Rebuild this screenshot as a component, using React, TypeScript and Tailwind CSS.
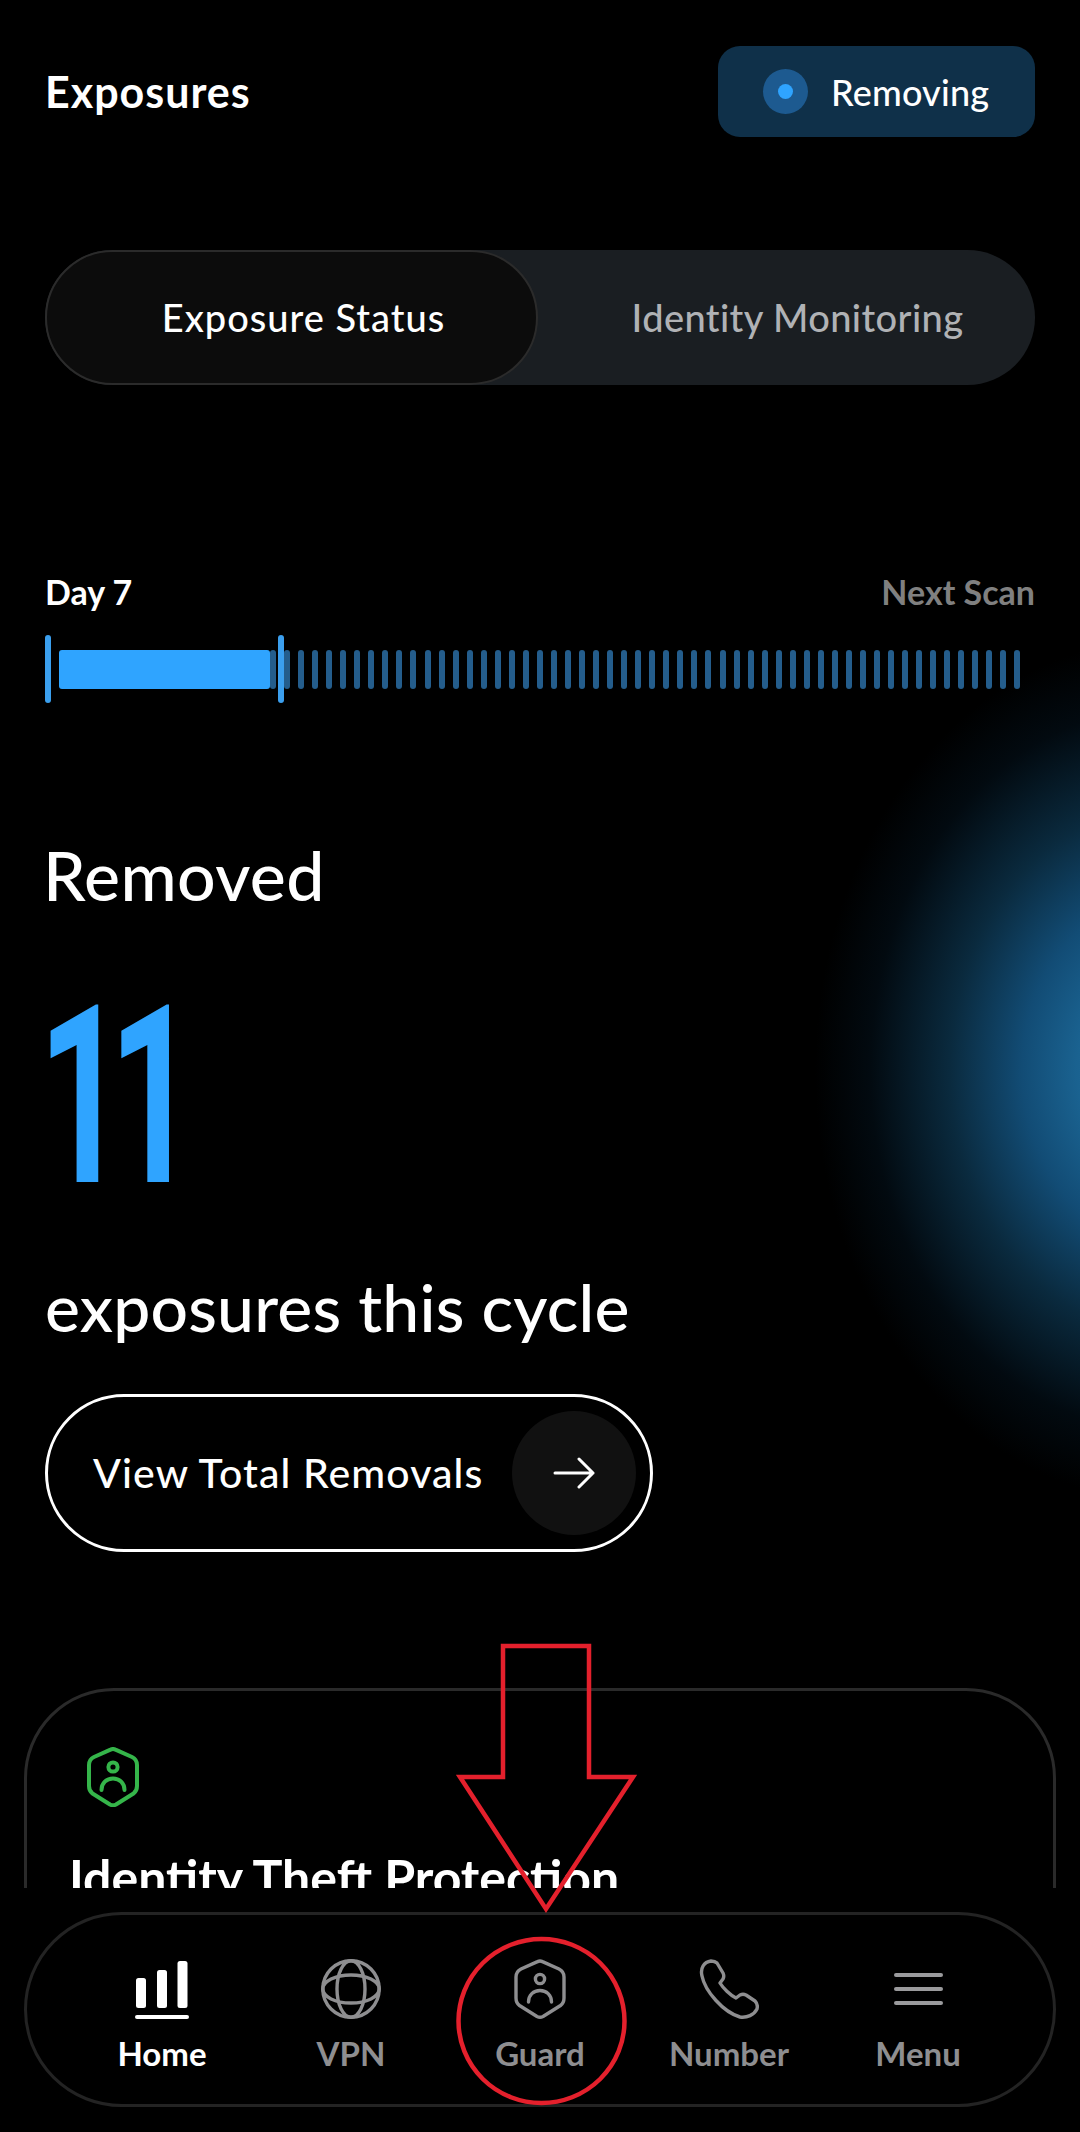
import React from "react";

const font = { fontFamily: '"Lato", "Noto Sans", sans-serif' };

function ShieldIcon({ className, strokeWidth = 3.4 }: { className: string; strokeWidth?: number }) {
  return (
    <svg viewBox="0 0 52 60" width="52" height="60" fill="none" stroke="currentColor" strokeWidth={strokeWidth} strokeLinecap="round" strokeLinejoin="round" className={className}>
      <path d="M23.5 2.6 Q26 1.4 28.5 2.6 L45 10 Q50 12.5 50 18 V39 Q50 44 46.5 46.5 L29 57.5 Q26 59 23 57.5 L5.5 46.5 Q2 44 2 39 V18 Q2 12.5 7 10 Z" />
      <circle cx="26" cy="20" r="4.6" />
      <path d="M14.5 43 C14.5 36 19.5 31.5 26 31.5 C32.5 31.5 37.5 36 37.5 43" />
    </svg>
  );
}

function NavItem({ label, active, children }: { label: string; active?: boolean; children: React.ReactNode }) {
  return (
    <div className={`flex w-[189px] flex-col items-center ${active ? "text-white" : "text-[#8e8e90]"}`}>
      <div className="flex h-[60px] items-center justify-center">{children}</div>
      <div className="mt-[12px] text-[33px] leading-[44px] font-bold">{label}</div>
    </div>
  );
}

export default function App() {
  const ticks = Array.from({ length: 54 });
  return (
    <div className="relative h-[2132px] w-[1080px] overflow-hidden bg-black text-white" style={font}>
      <div className="pointer-events-none absolute inset-0 bg-[radial-gradient(ellipse_345px_430px_at_1160px_1070px,#217099_0%,#1a6290_24%,#124c75_40%,#0a2a3e_61%,#020a10_84%,#000000_100%)]" />

      <div className="relative flex h-[1888px] flex-col overflow-hidden">
        <div className="shrink-0 px-[45px]">
          <div className="flex items-center justify-between pt-[46px]">
            <div className="text-[43px] leading-[52px] font-bold tracking-[1px]">Exposures</div>
            <div className="flex h-[91px] w-[317px] items-center rounded-[22px] bg-[#0f3049] pl-[45px]">
              <div className="flex h-[45px] w-[45px] items-center justify-center rounded-full bg-[#1d5a90]">
                <div className="h-[15px] w-[15px] rounded-full bg-[#2fa4ff]" />
              </div>
              <div className="ml-[23px] text-[36px] leading-[44px] font-medium tracking-[0.2px]">Removing</div>
            </div>
          </div>

          <div className="mt-[113px] flex h-[135px] w-[990px] items-center rounded-full bg-[#1a1e22]">
            <div className="flex h-[135px] w-[493px] items-center justify-center rounded-full border-2 border-[#2b2b2b] bg-[#0c0c0c] pl-[24px] text-[38px] font-medium tracking-[1px]">
              Exposure Status
            </div>
            <div className="flex-1 pl-[22px] text-center text-[38px] font-medium tracking-[0.4px] text-[#b0b2b5]">Identity Monitoring</div>
          </div>

          <div className="mt-[184px] flex items-center justify-between text-[34px] leading-[46px] font-bold">
            <span>Day 7</span>
            <span className="text-[#808080]">Next Scan</span>
          </div>

          <div className="relative mt-[20px] flex h-[68px] items-center">
            <div className="h-[68px] w-[6px] rounded-full bg-[#3b9fee]" />
            <div className="ml-[8px] h-[39px] w-[211px] rounded-[3px] bg-[#2fa4ff]" />
            <div className="flex flex-1 justify-between pr-[14px]">
              {ticks.map((_, i) => (
                <div key={i} className="h-[39px] w-[6px] rounded-full bg-[#245d8c]" />
              ))}
            </div>
            <div className="absolute top-0 left-[233px] h-[68px] w-[6px] rounded-full bg-[#3b9fee]" />
          </div>

          <div className="mt-[132px] -ml-[2px] text-[68px] leading-[80px] font-medium tracking-[0.4px]">Removed</div>
          <div
            className="mt-[48px] -ml-[7px] h-[270px] origin-left scale-x-[0.62] text-[248px] leading-[270px] font-bold tracking-[-28px] whitespace-nowrap text-[#2fa4ff]"
            style={{ fontFamily: '"Roboto", sans-serif' }}
          >
            11
          </div>
          <div className="mt-[32px] text-[66px] leading-[84px] font-medium tracking-[0.2px]">exposures this cycle</div>

          <div className="mt-[45px] flex h-[158px] w-[608px] items-center justify-between rounded-full border-[3px] border-white pr-[14px] pl-[45px]">
            <span className="text-[41px] font-medium tracking-[1.1px]">View Total Removals</span>
            <div className="flex h-[124px] w-[124px] items-center justify-center rounded-full bg-[#111111]">
              <svg width="42" height="32" viewBox="0 0 42 32" fill="none" stroke="white" strokeWidth="3" strokeLinecap="round" strokeLinejoin="round">
                <path d="M2 16 H40 M26 2 L40 16 L26 30" />
              </svg>
            </div>
          </div>
        </div>

        <div className="mx-[24px] mt-[136px] h-[400px] shrink-0 rounded-[90px] border-[3px] border-[#2a2a2a] pt-[56px] pl-[60px]">
          <ShieldIcon className="text-[#35b54a]" strokeWidth={4} />
          <div className="mt-[40px] -ml-[18px] text-[50px] leading-[60px] font-bold whitespace-nowrap">Identity Theft Protection</div>
        </div>
      </div>

      <div className="relative mx-[24px] mt-[24px] flex h-[195px] w-[1032px] justify-center rounded-full border-[3px] border-[#232323] pt-[44px]">
        <NavItem label="Home" active>
          <svg width="54" height="60" viewBox="0 0 54 60" fill="white">
            <rect x="1" y="19" width="10" height="30" rx="2.5" />
            <rect x="22" y="11" width="10" height="38" rx="2.5" />
            <rect x="42.5" y="2" width="10" height="47" rx="2.5" />
            <rect x="0" y="56" width="54" height="4" rx="2" />
          </svg>
        </NavItem>
        <NavItem label="VPN">
          <svg width="60" height="60" viewBox="0 0 60 60" fill="none" stroke="currentColor" strokeWidth="3.4">
            <circle cx="30" cy="30" r="28.2" />
            <ellipse cx="30" cy="30" rx="14" ry="28.2" />
            <ellipse cx="30" cy="30" rx="28.2" ry="14" />
          </svg>
        </NavItem>
        <NavItem label="Guard">
          <ShieldIcon className="text-[#8e8e90]" />
        </NavItem>
        <NavItem label="Number">
          <svg width="60" height="60" viewBox="0 0 60 60" fill="none" stroke="currentColor" strokeWidth="3.4" strokeLinejoin="round">
            <path d="M12 2 C5 3 1 9 3 17 C6 32 24 53 41 58 C48 59 55 56 58 50 C59 46 58 44 56 42 L47 36 C45 35 43 35 41 36 L37 39 C31 36 24 29 21 24 L24 20 C25 18 25 16 24 14 L18 4 C16 2 14 2 12 2 Z" />
          </svg>
        </NavItem>
        <NavItem label="Menu">
          <div className="flex flex-col gap-[10px]">
            <div className="h-[4px] w-[49px] rounded-full bg-[#9a9a9c]" />
            <div className="h-[4px] w-[49px] rounded-full bg-[#9a9a9c]" />
            <div className="h-[4px] w-[49px] rounded-full bg-[#9a9a9c]" />
          </div>
        </NavItem>
      </div>

      <svg className="pointer-events-none absolute top-0 left-0" width="1080" height="2132" fill="none" stroke="#e4202c">
        <path d="M503 1646 H589 V1777 H633 L546 1909 L460 1777 H503 Z" strokeWidth="4.5" strokeLinejoin="miter" />
        <ellipse cx="541.5" cy="2021" rx="83" ry="82" strokeWidth="4.5" />
      </svg>
    </div>
  );
}
